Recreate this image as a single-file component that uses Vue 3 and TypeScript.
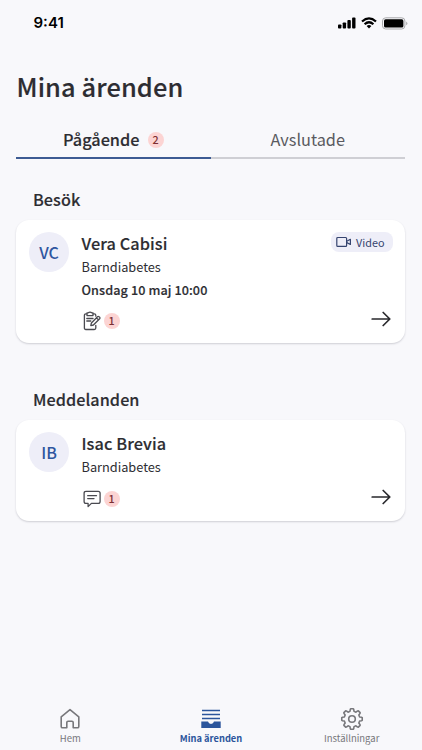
<script setup lang="ts">
interface Errand {
  section: string
  initials: string
  name: string
  clinic: string
  time?: string
  video?: boolean
  kind: 'form' | 'message'
  count: number
}

const errands: Errand[] = [
  {
    section: 'Besök',
    initials: 'VC',
    name: 'Vera Cabisi',
    clinic: 'Barndiabetes',
    time: 'Onsdag 10 maj 10:00',
    video: true,
    kind: 'form',
    count: 1,
  },
  {
    section: 'Meddelanden',
    initials: 'IB',
    name: 'Isac Brevia',
    clinic: 'Barndiabetes',
    kind: 'message',
    count: 1,
  },
]

// Eight-toothed cog outline centred on 12,12
const cog = (() => {
  const pts: string[] = []
  for (let i = 0; i < 8; i++) {
    const mid = i * 45 - 90
    const corners: [number, number][] = [[-15, 7.9], [-10, 9.8], [-7, 10.3], [7, 10.3], [10, 9.8], [15, 7.9]]
    for (const [offset, r] of corners) {
      const a = ((mid + offset) * Math.PI) / 180
      pts.push(`${(12 + r * Math.cos(a)).toFixed(2)} ${(12 + r * Math.sin(a)).toFixed(2)}`)
    }
  }
  return `M${pts.join('L')}Z`
})()
</script>

<template>
  <div class="screen">
    <header class="status">
      <span class="clock">9:41</span>
      <div class="indicators">
        <svg width="18" height="12" viewBox="0 0 18 12" fill="#000">
          <rect x="0" y="7.4" width="3.4" height="4" rx="0.9" />
          <rect x="4.7" y="5.4" width="3.4" height="6" rx="0.9" />
          <rect x="9.4" y="3" width="3.4" height="8.4" rx="0.9" />
          <rect x="14.1" y="0.5" width="3.4" height="10.9" rx="0.9" />
        </svg>
        <svg class="wifi" width="16" height="12" viewBox="0 0 16 12" fill="none" stroke="#000" stroke-width="2.2">
          <path d="M1 4.5Q8-1.8 15 4.5" />
          <path d="M3.6 7.2Q8 3.3 12.4 7.2" />
          <path d="M8 11.4L5.6 9Q8 7.1 10.4 9Z" fill="#000" stroke="none" />
        </svg>
        <svg class="battery" width="26" height="13" viewBox="0 0 26 13">
          <rect x="0.5" y="0.8" width="22.4" height="11.2" rx="3.2" fill="none" stroke="#a9a9ab" />
          <rect x="2" y="2.3" width="19.4" height="8.2" rx="1.6" fill="#000" />
          <path d="M24.2 4.5Q26.6 6.4 24.2 8.3Z" fill="#a9a9ab" />
        </svg>
      </div>
    </header>

    <h1>Mina ärenden</h1>

    <nav class="tabs">
      <div class="tab active"><span>Pågående</span><span class="badge">2</span></div>
      <div class="tab"><span>Avslutade</span></div>
    </nav>

    <main>
      <section v-for="e in errands" :key="e.initials">
        <h2>{{ e.section }}</h2>
        <article class="card">
          <div class="avatar">{{ e.initials }}</div>
          <div class="details">
            <div class="head">
              <h3>{{ e.name }}</h3>
              <span v-if="e.video" class="video">
                <svg width="16" height="12" viewBox="0 0 16 12" fill="none" stroke="#35446f" stroke-width="1.2" stroke-linejoin="round">
                  <rect x="0.8" y="1.5" width="9.8" height="8.8" rx="0.9" />
                  <path d="M10.8 5.2L14.4 3.3V8.5L10.8 6.6" />
                </svg>
                Video
              </span>
            </div>
            <p class="clinic">{{ e.clinic }}</p>
            <p v-if="e.time" class="time">{{ e.time }}</p>
            <div class="foot">
              <svg v-if="e.kind === 'form'" width="20" height="20" viewBox="0 0 20 20" fill="none" stroke="#4a4a50" stroke-width="1.3" stroke-linecap="round" stroke-linejoin="round">
                <path d="M13.8 14.3V17Q13.8 18.5 12.3 18.5H3.9Q2.4 18.5 2.4 17V4.3Q2.4 2.8 3.9 2.8H4.7M11.4 2.8H12.3Q13.8 2.8 13.8 4.3V5.2" />
                <path d="M5 1.8H6.2Q8 .3 9.8 1.8H11V4.6H5Z" />
                <path d="M4.8 7.5H11M4.8 10H8.8" />
                <path d="M8.8 14.7L9.4 12L15.5 5.7Q16.2 5 17 5.7L17.7 6.3Q18.4 7 17.7 7.7L11.4 14ZM14.4 6.9L16.5 8.8" />
              </svg>
              <svg v-else width="20" height="20" viewBox="0 0 20 20" fill="none" stroke="#4a4a50" stroke-width="1.3" stroke-linecap="round" stroke-linejoin="round">
                <path d="M4 2.3H16.2Q18.1 2.3 18.1 4.2V12.5Q18.1 14.4 16.2 14.4H9.4L6.1 17.6V14.4H4Q2.1 14.4 2.1 12.5V4.2Q2.1 2.3 4 2.3Z" />
                <path d="M5.7 6.7H14.5M5.7 9.6H12" />
              </svg>
              <span class="badge">{{ e.count }}</span>
              <svg class="arrow" width="20" height="16" viewBox="0 0 20 16" fill="none" stroke="#29292d" stroke-width="1.7" stroke-linecap="round" stroke-linejoin="round">
                <path d="M1.2 8H18.6M12.2 1.5L18.8 8L12.2 14.5" />
              </svg>
            </div>
          </div>
        </article>
      </section>
    </main>

    <footer>
      <div class="item">
        <svg width="24" height="24" viewBox="0 0 24 24" fill="none" stroke="#77777b" stroke-width="1.6" stroke-linejoin="round">
          <path d="M3.2 9.8L12 2.7L20.8 9.8V19.4Q20.8 20.8 19.4 20.8H15.2V15.5Q15.2 14.2 13.9 14.2H10.1Q8.8 14.2 8.8 15.5V20.8H4.6Q3.2 20.8 3.2 19.4Z" />
        </svg>
        <span>Hem</span>
      </div>
      <div class="item current">
        <svg width="24" height="24" viewBox="0 0 24 24" fill="none" stroke="#2b559c" stroke-width="1.5">
          <path d="M3 3.5H21M3 7.5H21M3 11.5H21" />
          <path d="M2.3 14.6H9Q9.6 16.9 12 16.9Q14.4 16.9 15 14.6H21.7V20.9H2.3Z" fill="#2b559c" stroke="none" />
        </svg>
        <span>Mina ärenden</span>
      </div>
      <div class="item">
        <svg width="24" height="24" viewBox="0 0 24 24" fill="none" stroke="#77777b" stroke-width="1.6" stroke-linejoin="round">
          <path :d="cog" />
          <circle cx="12" cy="12" r="3.3" />
        </svg>
        <span>Inställningar</span>
      </div>
    </footer>
  </div>
</template>

<style>
body {
  background: #f8f8fb;
}
</style>

<style scoped>
.screen {
  box-sizing: border-box;
  width: 422px;
  height: 750px;
  display: flex;
  flex-direction: column;
  background: #f8f8fb;
  color: #2d2d32;
  font-family: "Noto Sans CJK SC", "Noto Sans", sans-serif;
}
svg {
  display: block;
  flex: none;
}
h1, h2, h3, p {
  margin: 0;
}
h1, h2, h3, .time, .tab.active > span:first-child {
  -webkit-text-stroke: 0.15px currentColor;
}
.status {
  height: 46px;
  padding: 0 15px 0 33.5px;
  display: flex;
  align-items: center;
  justify-content: space-between;
}
.clock {
  font: 600 15px/20px Inter, sans-serif;
  color: #000;
}
.indicators {
  display: flex;
  align-items: center;
  margin-right: -0.5px;
}
.wifi {
  margin-left: 5px;
}
.battery {
  margin-left: 5px;
}
h1 {
  margin: 21px 0 0 16.5px;
  font-size: 25.4px;
  line-height: 38px;
  font-weight: 500;
  letter-spacing: 0.1px;
}
.tabs {
  margin: 16px 17px 0 16px;
  display: flex;
}
.tab {
  box-sizing: border-box;
  flex: 1;
  height: 38px;
  display: flex;
  justify-content: center;
  align-items: center;
  gap: 8px;
  border-bottom: 2px solid #cfcfd4;
  font-size: 16.3px;
  line-height: 24px;
  color: #5a5a60;
}
.tab > span:first-child {
  margin-top: -1px;
}
.tab.active {
  border-color: #3d5b93;
  color: #2d2d32;
  font-weight: 500;
}
.badge {
  width: 16px;
  height: 16px;
  border-radius: 50%;
  background: #fcd4d3;
  color: #7d2f32;
  font-size: 10.8px;
  line-height: 15.5px;
  font-weight: 500;
  text-align: center;
}
.tab .badge {
  margin-top: 1.5px;
}
main {
  flex: 1;
  padding: 27px 17px 0 16px;
  display: flex;
  flex-direction: column;
  gap: 43.3px;
}
h2 {
  margin: 0 0 7.5px 17px;
  font-size: 16.2px;
  line-height: 26px;
  font-weight: 500;
  letter-spacing: 0.06px;
}
.card {
  padding: 12px 14px 12px 13px;
  display: flex;
  gap: 12.5px;
  border-radius: 13px;
  background: #fff;
  box-shadow: 0 1px 2px rgba(40, 40, 60, 0.2);
}
.avatar {
  width: 40px;
  height: 40px;
  margin-top: 0.5px;
  flex: none;
  border-radius: 50%;
  background: #eeeef8;
  color: #2f56a0;
  font-size: 16px;
  line-height: 40px;
  font-weight: 500;
  text-align: center;
}
.details {
  flex: 1;
}
.head {
  height: 24.5px;
  display: flex;
  justify-content: space-between;
}
h3 {
  font-size: 16.3px;
  line-height: 22px;
  font-weight: 500;
  letter-spacing: 0.08px;
}
.video {
  box-sizing: border-box;
  height: 20px;
  margin-right: -2px;
  padding: 0 8.5px 0 5px;
  display: flex;
  align-items: center;
  gap: 4px;
  border-radius: 8px;
  background: #eeeef8;
  color: #35446f;
  font-size: 10.8px;
  line-height: 20px;
}
.clinic, .time {
  font-size: 12.75px;
  line-height: 22.6px;
}
.time {
  font-size: 12.65px;
  font-weight: 500;
  letter-spacing: 0.08px;
}
.foot {
  margin-top: 9.9px;
  height: 20px;
  display: flex;
  align-items: center;
  gap: 2px;
}
.arrow {
  margin: -4px 0 0 auto;
}
footer {
  height: 43px;
  display: flex;
}
.item {
  flex: 1;
  display: flex;
  flex-direction: column;
  align-items: center;
  color: #77777b;
  font-size: 9.5px;
  line-height: 15px;
}
.item.current {
  color: #2b559c;
  font-size: 9.3px;
  font-weight: 700;
}
</style>
